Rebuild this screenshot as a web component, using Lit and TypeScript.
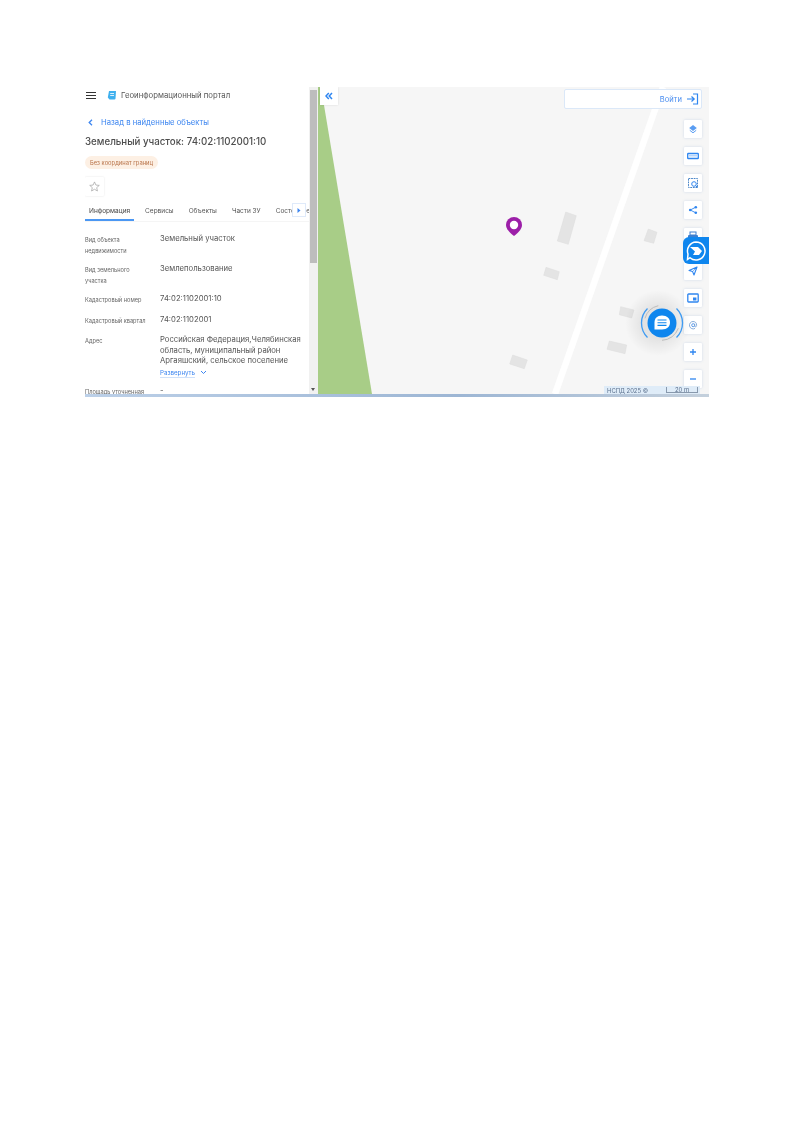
import { LitElement, html, css, svg } from "lit";
import { customElement } from "lit/decorators.js";

const BUILDINGS = [
  "247.7,125 258.3,128.7 250.3,157.3 239.3,154",
  "228,180.3 241.3,184.7 239.3,192.7 225.7,188.3",
  "330.3,142 339,145.3 335.7,156.3 326,153.7",
  "302.7,219.7 316,223 313.7,231 301.3,227.7",
  "291.3,254 308.7,258 307,266.7 289,262.3",
  "194.7,268 209.3,273 206.3,281.7 191.7,277",
];

const ROWS: [string, string][] = [
  ["Вид объекта недвижимости", "Земельный участок"],
  ["Вид земельного участка", "Землепользование"],
  ["Кадастровый номер", "74:02:1102001:10"],
  ["Кадастровый квартал", "74:02:1102001"],
];

const ICONS = [
  svg`<path d="M6 2 9.800 5 6 8 2.200 5Z" fill="#5a9df2"/><path d="M2.800 7.300 6 9.800 9.200 7.300" fill="none" stroke="#5a9df2" stroke-width="1"/>`,
  svg`<rect x=".7" y="3.500" width="10.600" height="5" rx=".6" fill="none" stroke="#2f86f0" stroke-width="1.300"/><path d="M3 6.500V5M5 6.500V5M7 6.500V5M9 6.500V5" stroke="#2f86f0" stroke-width=".7"/>`,
  svg`<rect x="1.500" y="1.500" width="9" height="9" fill="none" stroke="#4b86c8" stroke-width="1" stroke-dasharray="1.800 .8"/><circle cx="7" cy="7" r="2.300" fill="none" stroke="#2f86f0" stroke-width="1"/><path d="M8.600 8.600 10.600 10.600" stroke="#2f86f0" stroke-width="1"/>`,
  svg`<circle cx="8.800" cy="3.200" r="1.300" fill="#2f86f0"/><circle cx="8.800" cy="8.800" r="1.300" fill="#2f86f0"/><circle cx="3.200" cy="6" r="1.300" fill="#2f86f0"/><path d="M8.800 3.200 3.200 6 8.800 8.800" fill="none" stroke="#2f86f0" stroke-width=".9"/>`,
  svg`<rect x="3" y="1" width="6" height="3" fill="none" stroke="#3d7fd0" stroke-width="1"/><rect x="1" y="4" width="10" height="5" rx="1" fill="#3d7fd0"/><rect x="3" y="7.500" width="6" height="3.500" fill="#fff" stroke="#3d7fd0" stroke-width=".8"/>`,
];
const ICONS2 = [
  svg`<path d="M10 2 2 5.400 5.600 6.600 7 10Z" fill="none" stroke="#2f86f0" stroke-width="1.100" stroke-linejoin="round"/><path d="M10 2 5.600 6.600" stroke="#2f86f0" stroke-width=".7"/>`,
  svg`<rect x=".8" y="2" width="10.400" height="8" rx=".8" fill="none" stroke="#2f86f0" stroke-width="1.300"/><rect x="6" y="5.500" width="3.400" height="3" fill="#2f86f0"/>`,
  svg`<circle cx="6.200" cy="6.200" r="1.500" fill="none" stroke="#4a90e8" stroke-width=".9"/><path d="M7.700 4.800V7C7.700 8.200 9.500 8.200 9.600 6.500 9.900 4 8.200 2.500 6 2.500A3.700 3.700 0 1 0 8 9.400" fill="none" stroke="#7aa4d6" stroke-width=".9"/>`,
  svg`<path d="M6 3V9M3 6H9" stroke="#2f86f0" stroke-width="1.300"/>`,
  svg`<path d="M3 6H9" stroke="#2f86f0" stroke-width="1.300"/>`,
];

@customElement("app-root")
export class AppRoot extends LitElement {
  static styles = css`
    :host {
      display: block;
      padding: 87px 84px 0 85px;
      font-family: Inter, Roboto, "Liberation Sans", sans-serif;
      background: #fff;
    }
    .frame { filter: blur(0.4px); }
    .main { display: flex; height: 307px; }
    .rule { height: 3px; background: linear-gradient(90deg, #bcd0e8, #9db6d4 60%, #c4d0dc); }
    .panel { width: 224px; height: 307px; overflow: hidden; flex: none; background: #fff; }
    .head { display: flex; align-items: center; height: 16px; padding-left: 1px; color: #555; font-size: 7.75px; }
    .burger { width: 10px; height: 7px; margin-right: 11px; border-top: 1px solid #333; border-bottom: 1px solid #333; box-sizing: border-box; }
    .burger::after { content: ""; display: block; height: 1px; margin-top: 2px; background: #333; }
    .logo { width: 10px; height: 10px; margin-right: 4px; }
    .back { display: flex; align-items: center; margin-top: 13px; height: 12px; padding-left: 3px; font-size: 7.7px; color: #3d86f0; gap: 8px; }
    h1 { margin: 7px 0 0; font-size: 9.73px; line-height: 14px; font-weight: 500; color: #4d4d4d; }
    .tag { display: inline-block; margin-top: 7px; height: 13px; line-height: 13px; padding: 0 5px; border-radius: 7px; font-size: 5.8px; background: #fdf0e4; color: #b9744a; }
    .star { width: 19px; height: 19px; margin-top: 8px; display: flex; align-items: center; justify-content: center; box-shadow: 0 0 2px rgba(0,0,0,.12); border-radius: 1px; }
    .tabs { position: relative; display: flex; height: 19px; margin-top: 6px; border-bottom: 1px solid #f5f5f5; font-size: 6.5px; color: #555; white-space: nowrap; overflow: hidden; }
    .tab { padding: 0 4px; margin-right: 7px; line-height: 18px; }
    .tab.on { color: #444; border-bottom: 2px solid #4b97f3; height: 17px; }
    .arrow { position: absolute; left: 207px; top: 1px; width: 14px; height: 14px; background: #fff; border: 1px solid #dfeafa; box-sizing: border-box; display: flex; align-items: center; justify-content: center; }
    .rows { margin-top: 12px; }
    .row { display: grid; grid-template-columns: 75px 1fr; margin-bottom: 8px; min-height: 12.5px; }
    .lbl { font-size: 5.65px; line-height: 10.5px; color: #666; padding: 1px 12px 0 0; }
    .val { font-size: 7.7px; line-height: 10.6px; color: #555; padding-right: 2px; }
    .more { margin-top: 1px; display: flex; align-items: center; gap: 5px; font-size: 6.2px; line-height: 11px; color: #3d86f0; }
    .more span { line-height: 9px; border-bottom: 1px solid #cfe1fa; }
    .scroll { width: 9px; flex: none; background: #f1f1f1; position: relative; }
    .thumb { position: absolute; left: 1px; right: 1px; top: 3px; height: 173px; background: #bdbdbd; }
    .down { position: absolute; left: 2px; bottom: 3px; border: 2.5px solid transparent; border-top: 3px solid #555; border-bottom: 0; }
    .map { flex: 1; position: relative; overflow: hidden; background: #f6f6f6; }
    .canvas { position: absolute; inset: 0; width: 100%; height: 100%; }
    .collapse { position: absolute; left: 2px; top: 0; width: 18px; height: 18px; background: #fff; box-shadow: 0 0 2px rgba(0,0,0,.12); display: flex; align-items: center; justify-content: center; }
    .login { position: absolute; left: 246px; top: 2px; width: 138px; height: 20px; box-sizing: border-box; background: #fff; border: 1px solid #dbe8f8; border-radius: 2px; display: flex; align-items: center; justify-content: flex-end; gap: 3px; padding-right: 2px; font-size: 7.6px; color: #4c8ff0; }
    .tools { position: absolute; left: 366px; top: 33px; display: flex; flex-direction: column; gap: 9px; }
    .tools.two { top: 175px; }
    .btn { width: 18px; height: 18px; background: #fff; border-radius: 1px; box-shadow: 0 0 3px rgba(70,120,190,.22); display: flex; align-items: center; justify-content: center; }
    .widget { position: absolute; left: 365px; top: 150px; width: 26px; height: 27px; background: #0f86ee; border-radius: 6px 0 0 6px; display: flex; align-items: center; justify-content: center; }
    .chat { position: absolute; left: 303px; top: 201px; width: 70px; height: 70px; }
    .foot { position: absolute; left: 286px; bottom: 0; width: 96px; height: 8px; display: flex; align-items: center; justify-content: space-between; padding: 0 2px 0 3px; box-sizing: border-box; background: #dfecf8; font-size: 5.9px; color: #5a6f8c; }
    .scale { width: 30px; text-align: center; line-height: 6px; border: 1px solid #8899ad; border-top: 0; height: 5px; }
  `;

  render() {
    return html`<div class="frame">
      <div class="main">
        <div class="panel">
          <div class="head">
            <div class="burger"></div>
            <svg class="logo" viewBox="0 0 10 10"><path d="M2 1H9L8.500 8.500Q8.400 9.500 7.500 9.500H2.500L.8 7.500Z" fill="#3fb0ee"/><path d="M3.200 3.500H7M3.200 5.500H7" stroke="#fff" stroke-width=".8"/></svg>
            <span>Геоинформационный портал</span>
          </div>
          <div class="back">
            <svg width="5" height="7" viewBox="0 0 5 7"><path d="M4 .8 1.200 3.500 4 6.200" fill="none" stroke="#3d86f0" stroke-width="1.300"/></svg>
            <span>Назад в найденные объекты</span>
          </div>
          <h1>Земельный участок: 74:02:1102001:10</h1>
          <div class="tag">Без координат границ</div>
          <div class="star">
            <svg width="11" height="11" viewBox="0 0 12 12"><path d="M6 1 7.500 4.400 11.200 4.800 8.400 7.200 9.200 10.900 6 9 2.800 10.900 3.600 7.200.8 4.800 4.500 4.400Z" fill="none" stroke="#a5a5a5" stroke-width=".8"/></svg>
          </div>
          <div class="tabs">
            <div class="tab on">Информация</div>
            <div class="tab">Сервисы</div>
            <div class="tab">Объекты</div>
            <div class="tab">Части ЗУ</div>
            <div class="tab">Состояние</div>
            <div class="arrow"><svg width="4" height="5" viewBox="0 0 4 5"><path d="M.5 0 3.500 2.500.5 5Z" fill="#3d86f0"/></svg></div>
          </div>
          <div class="rows">
            ${ROWS.map(([l, v]) => html`<div class="row"><div class="lbl">${l}</div><div class="val">${v}</div></div>`)}
            <div class="row">
              <div class="lbl">Адрес</div>
              <div class="val">Российская Федерация,Челябинская область, муниципальный район Аргаяшский, сельское поселение
                <div class="more"><span>Развернуть</span>
                  <svg width="7" height="5" viewBox="0 0 7 5"><path d="M1 1 3.500 3.500 6 1" fill="none" stroke="#3d86f0" stroke-width="1"/></svg>
                </div>
              </div>
            </div>
            <div class="row"><div class="lbl">Площадь уточненная</div><div class="val">-</div></div>
          </div>
        </div>
        <div class="scroll"><div class="thumb"></div><div class="down"></div></div>
        <div class="map">
          <svg class="canvas" viewBox="0 0 391 307" preserveAspectRatio="none">
            <polygon points="0,0 3,0 54,307 0,307" fill="#a8cd87"/>
            <line x1="345" y1="0" x2="237" y2="307" stroke="#fff" stroke-width="6.500"/>
            ${BUILDINGS.map((p) => svg`<polygon points=${p} fill="#e4e4e4" stroke="#dcdcdc" stroke-width=".5"/>`)}
            <path d="M196 149C190.500 144.500 188 141.500 188 138A8 8 0 1 1 204 138C204 141.500 201.500 144.500 196 149Z" fill="#9c1fa8"/>
            <circle cx="196" cy="138" r="4.200" fill="#fff"/>
          </svg>
          <div class="collapse">
            <svg width="8" height="8" viewBox="0 0 8 8"><path d="M3.800 1 1 4 3.800 7M7 1 4.200 4 7 7" fill="none" stroke="#2f86f0" stroke-width="1.500"/></svg>
          </div>
          <div class="login">
            <span>Войти</span>
            <svg width="14" height="12" viewBox="0 0 14 12"><path d="M8 1H12.500V11H8" fill="none" stroke="#2f86f0" stroke-width="1.200"/><path d="M2 6H9M6.500 3.500 9.200 6 6.500 8.500" fill="none" stroke="#2f86f0" stroke-width="1.200"/></svg>
          </div>
          <div class="tools">
            ${ICONS.map((i) => html`<div class="btn"><svg width="12" height="12" viewBox="0 0 12 12">${i}</svg></div>`)}
          </div>
          <div class="tools two">
            ${ICONS2.map((i) => html`<div class="btn"><svg width="12" height="12" viewBox="0 0 12 12">${i}</svg></div>`)}
          </div>
          <div class="widget">
            <svg width="22" height="22" viewBox="0 0 22 22"><path d="M11 2A9 9 0 1 1 5 17.700L2.500 19.500 3 14A9 9 0 0 1 11 2Z" fill="#0f86ee" stroke="#fff" stroke-width="1.500"/><path d="M5 7H13L17 11 14 15H8L10 11.500Z" fill="#fff"/></svg>
          </div>
          <svg class="chat" viewBox="0 0 70 70">
            <defs><radialGradient id="g"><stop offset=".45" stop-color="#000" stop-opacity=".08"/><stop offset="1" stop-color="#000" stop-opacity="0"/></radialGradient></defs>
            <circle cx="37" cy="35" r="33" fill="url(#g)"/>
            <path d="M26.500 20.500A20.500 20.500 0 0 0 26.500 49.500M55.500 20.500A20.500 20.500 0 0 1 55.500 49.500" fill="none" stroke="#3f9bf2" stroke-width="1.300"/>
            <path d="M24 30.300A18 18 0 0 1 37.300 17.700M41 52.300A18 18 0 0 0 57.300 40.300" fill="none" stroke="#bdbdbd" stroke-width="1"/>
            <circle cx="41" cy="35" r="14.500" fill="#0f86ee"/>
            <path d="M41 27.500C46 27.500 49 30.500 49 34.500S46 41.500 41 41.500H33.500V34.500C33.500 30.500 36 27.500 41 27.500Z" fill="#fff"/>
            <path d="M36.500 32H45.500M36.500 34.700H45.500M36.500 37.400H45.500" stroke="#0f86ee" stroke-width="1.100"/>
          </svg>
          <div class="foot"><span>НСПД 2025 ©</span><div class="scale">20 m</div></div>
        </div>
      </div>
      <div class="rule"></div>
    </div>`;
  }
}
